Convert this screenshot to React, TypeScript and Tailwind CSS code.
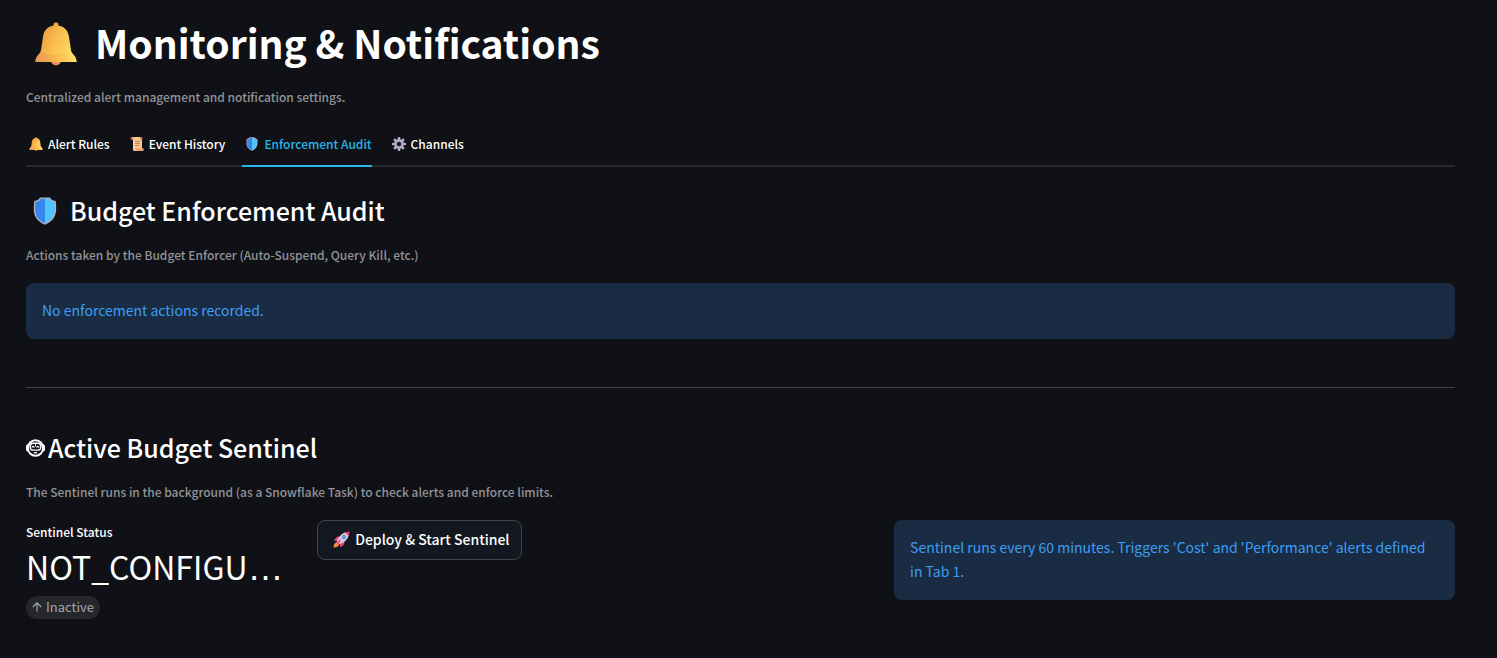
import { useState } from "react";
import type { ReactNode } from "react";

type IconProps = { className?: string };

const BellIcon = ({ className }: IconProps) => (
  <svg viewBox="0 0 42 44" className={className} aria-hidden="true">
    <defs>
      <linearGradient id="bellBody" x1="0" y1="0.2" x2="1" y2="0.6">
        <stop offset="0" stopColor="#e5933f" />
        <stop offset="0.5" stopColor="#f9bd4f" />
        <stop offset="1" stopColor="#ffdd63" />
      </linearGradient>
      <linearGradient id="bellRim" x1="0" y1="0" x2="1" y2="0">
        <stop offset="0" stopColor="#e9965a" />
        <stop offset="0.5" stopColor="#fbb84c" />
        <stop offset="1" stopColor="#ffe36b" />
      </linearGradient>
    </defs>
    <circle cx="21" cy="38.5" r="5" fill="#f08c68" />
    <rect x="18.5" y="0.5" width="5" height="6" rx="2" fill="#f3a840" />
    <path
      d="M21 3.5C13 3.5 8.8 8 8 15L6 28c-.4 2-1 3-2.300 4.500C1.500 34.500.7 36.500.5 40h41c-.2-3.500-1-5.500-3.200-7.500C37 31 36.400 30 36 28L34 15C33 8 29 3.500 21 3.500Z"
      fill="url(#bellBody)"
    />
    <path
      d="M5.500 30.500c10 2.500 21 2.500 31 0 .8 1.500 5 4 5 9.500H.5c0-5.500 4.200-8 5-9.500Z"
      fill="url(#bellRim)"
    />
  </svg>
);

const ShieldIcon = ({ className }: IconProps) => (
  <svg viewBox="0 0 24 28" className={className} aria-hidden="true">
    <path
      d="M7 .5h10c.8 1.800 2.500 3 5.700 3.500C24 15.500 23.500 22.500 12 27.700.5 22.500 0 15.500 1.300 4 4.500 3.500 6.200 2.300 7 .5Z"
      fill="#b5acbd"
    />
    <path d="M12 1.800H7.800C6.800 3.800 5 5 2.400 5.300 1.700 15 1.800 21.800 12 26.500Z" fill="#3587ee" />
    <path d="M12 1.800h4.200c1 2 2.800 3.200 5.400 3.500C22.300 15 22.200 21.800 12 26.500Z" fill="#52c4fd" />
  </svg>
);

const ScrollIcon = ({ className }: IconProps) => (
  <svg viewBox="0 0 14 14" className={className} aria-hidden="true">
    <path d="M2 0h9.500c1.300 0 1.500 3-.2 3H2C0 3 0 0 2 0Z" fill="#c97a52" />
    <path d="M2 0h8.500C9.600.8 9.800 2 12 3v9H3V3.500C3 1.500 3 .8 2 0Z" fill="#f7c58d" />
    <path d="M4.500 11h7.800c2 0 2 3 0 3H4.500c-2 0-2-3 0-3Z" fill="#f0a773" />
    <path d="M3 3v8.500c0 1.500.5 2.200 1.500 2.500C6 13.500 6 12 5.200 11V3Z" fill="#f9cf9a" />
    <path d="M5 4.500h5M5 6.500h5M5 8.500h4" stroke="#bd7350" strokeWidth="0.8" />
  </svg>
);

const GearIcon = ({ className }: IconProps) => (
  <svg viewBox="0 0 14 14" className={className} aria-hidden="true">
    <g fill="#b9adc7">
      <rect x="5.700" y="0" width="2.600" height="14" rx="0.8" />
      <rect x="5.700" y="0" width="2.600" height="14" rx="0.8" transform="rotate(45 7 7)" />
      <rect x="5.700" y="0" width="2.600" height="14" rx="0.8" transform="rotate(90 7 7)" />
      <rect x="5.700" y="0" width="2.600" height="14" rx="0.8" transform="rotate(135 7 7)" />
      <circle cx="7" cy="7" r="4.800" />
    </g>
    <circle cx="7" cy="7" r="2.600" fill="#75677f" />
    <circle cx="7" cy="7" r="1.900" fill="#0f1116" />
  </svg>
);

const RocketIcon = ({ className }: IconProps) => (
  <svg viewBox="0 0 17 17" className={className} aria-hidden="true">
    <path d="M.5 16.500C.5 13.500 1.500 11.500 4 11.500l2 1.800c0 2.300-2.500 3.200-5.500 3.200Z" fill="#f88c31" />
    <path d="M7 5.500C4 5.200 2 6.800 1.200 9.800l4 .5ZM11.500 10c.3 3-1.200 5-4.200 6l-.7-4Z" fill="#f4418a" />
    <path d="M3.500 11.500C5 6.500 8.500 2 13 1.200l2.800 2.800C15 8.500 10.500 12 5.500 13.500Z" fill="#d6cbdd" />
    <path d="M12 1.500C13.500.7 15 .4 16.600.4c0 1.600-.3 3.100-1.100 4.600Z" fill="#f2386c" />
    <path d="M3.200 11.300 8.700 8l-3.400 5.600Z" fill="#f4418a" />
    <circle cx="11" cy="6" r="1.900" fill="#3e7fc9" />
    <circle cx="11" cy="6" r="1.100" fill="#69b9f5" />
  </svg>
);

const SentinelIcon = ({ className }: IconProps) => (
  <svg viewBox="0 0 19 18" className={className} fill="none" stroke="#fff" aria-hidden="true">
    <ellipse cx="9.500" cy="9" rx="7.600" ry="7.700" strokeWidth="2" />
    <path d="M2 6C0 6.500 0 11.500 2 12M17 6c2 .5 2 5.500 0 6" strokeWidth="1.600" />
    <rect x="4.200" y="4.300" width="10.600" height="6.800" rx="3.200" strokeWidth="1.400" />
    <path d="M5.800 8.600c.6-1.600 2-1.600 2.600 0M10.600 8.600c.6-1.600 2-1.600 2.600 0" strokeWidth="1.300" />
    <path d="M9.500 4.500v3" strokeWidth="0.9" />
    <path d="M7.800 13.700h3.400" strokeWidth="1.400" />
  </svg>
);

const ArrowUpIcon = ({ className }: IconProps) => (
  <svg viewBox="0 0 12 12" className={className} fill="none" stroke="currentColor" aria-hidden="true">
    <path d="M6 11.500V1M1 6 6 1l5 5" strokeWidth="1.400" />
  </svg>
);

const tabs = [
  { id: "rules", label: "Alert Rules", Icon: BellIcon },
  { id: "history", label: "Event History", Icon: ScrollIcon },
  { id: "audit", label: "Enforcement Audit", Icon: ShieldIcon },
  { id: "channels", label: "Channels", Icon: GearIcon },
];

const Caption = ({ children }: { children: ReactNode }) => (
  <p className="text-[12px] leading-5 font-medium text-[#929396]">{children}</p>
);

const InfoBox = ({ children }: { children: ReactNode }) => (
  <div className="rounded-lg bg-[#192c43] px-4 pt-[15px] pb-[17px] text-[14px] leading-6 text-[#3d9df3]">
    {children}
  </div>
);

export default function App() {
  const [activeTab, setActiveTab] = useState("audit");

  return (
    <main className="min-h-screen bg-[#0f1116] pt-4 pr-[42px] pb-8 pl-[26px] font-['Noto_Sans_CJK_JP','Noto_Sans',sans-serif] text-white">
      <h1 className="flex items-center gap-[18px] pl-[9px] text-[39px] leading-[52px] font-bold">
        <BellIcon className="mt-1 h-11 w-[42px]" />
        Monitoring &amp; Notifications
      </h1>
      <div className="mt-[19px]">
        <Caption>Centralized alert management and notification settings.</Caption>
      </div>

      <div role="tablist" className="mt-4 flex gap-[17px] border-b-2 border-[#262730]">
        {tabs.map(({ id, label, Icon }) => (
          <button
            key={id}
            type="button"
            role="tab"
            aria-selected={activeTab === id}
            onClick={() => setActiveTab(id)}
            className={`-mb-0.5 flex h-11 items-center gap-[5px] border-b-2 pl-[3px] text-[12px] leading-5 font-medium ${
              activeTab === id
                ? "border-[#29b5e8] text-[#29b5e8]"
                : "border-transparent text-white"
            }`}
          >
            <Icon className="h-3.5 w-3.5" />
            {label}
          </button>
        ))}
      </div>

      <section className="mt-[25px]">
        <h2 className="flex items-center gap-[13px] pl-[7px] text-[25px] leading-9 font-medium">
          <ShieldIcon className="mt-0.5 h-7 w-6" />
          Budget Enforcement Audit
        </h2>
        <div className="mt-[17px] mb-[18px]">
          <Caption>Actions taken by the Budget Enforcer (Auto-Suspend, Query Kill, etc.)</Caption>
        </div>
        <InfoBox>No enforcement actions recorded.</InfoBox>
      </section>

      <hr className="mt-12 mb-[41px] border-[#3d3f43]" />

      <section>
        <h2 className="flex items-center gap-[3px] text-[25px] leading-9 font-medium">
          <SentinelIcon className="mt-0.5 h-[18px] w-[19px]" />
          Active Budget Sentinel
        </h2>
        <div className="mt-[17px] mb-[18px]">
          <Caption>
            The Sentinel runs in the background (as a Snowflake Task) to check alerts and enforce
            limits.
          </Caption>
        </div>

        <div className="flex items-start gap-4">
          <div className="min-w-0 grow basis-[calc(20%-16px)]">
            <div className="text-[12px] leading-6 font-medium">Sentinel Status</div>
            <div className="text-[32px] leading-[44px] whitespace-nowrap">
              NOT_CONFIGU
              <span className="font-['Liberation_Sans',sans-serif] text-[36px] leading-none">…</span>
            </div>
            <div className="mt-2 flex h-[23px] w-fit items-center gap-1 rounded-full bg-[#25272d] px-1.5 pb-px text-[13px] leading-5 text-[#a3a5aa]">
              <ArrowUpIcon className="h-2.5 w-2.5" />
              Inactive
            </div>
          </div>
          <div className="min-w-0 grow basis-[calc(40%-16px)]">
            <button
              type="button"
              className="flex h-10 items-center gap-[5px] rounded-lg border border-[#43454a] bg-[#13171f] pr-[11px] pb-0.5 pl-[15px] text-[14px] leading-6 font-medium whitespace-nowrap"
            >
              <RocketIcon className="h-[17px] w-[17px]" />
              Deploy &amp; Start Sentinel
            </button>
          </div>
          <div className="min-w-0 grow basis-[calc(40%-16px)]">
            <InfoBox>
              Sentinel runs every 60 minutes. Triggers 'Cost' and 'Performance' alerts defined in
              Tab 1.
            </InfoBox>
          </div>
        </div>
      </section>
    </main>
  );
}
